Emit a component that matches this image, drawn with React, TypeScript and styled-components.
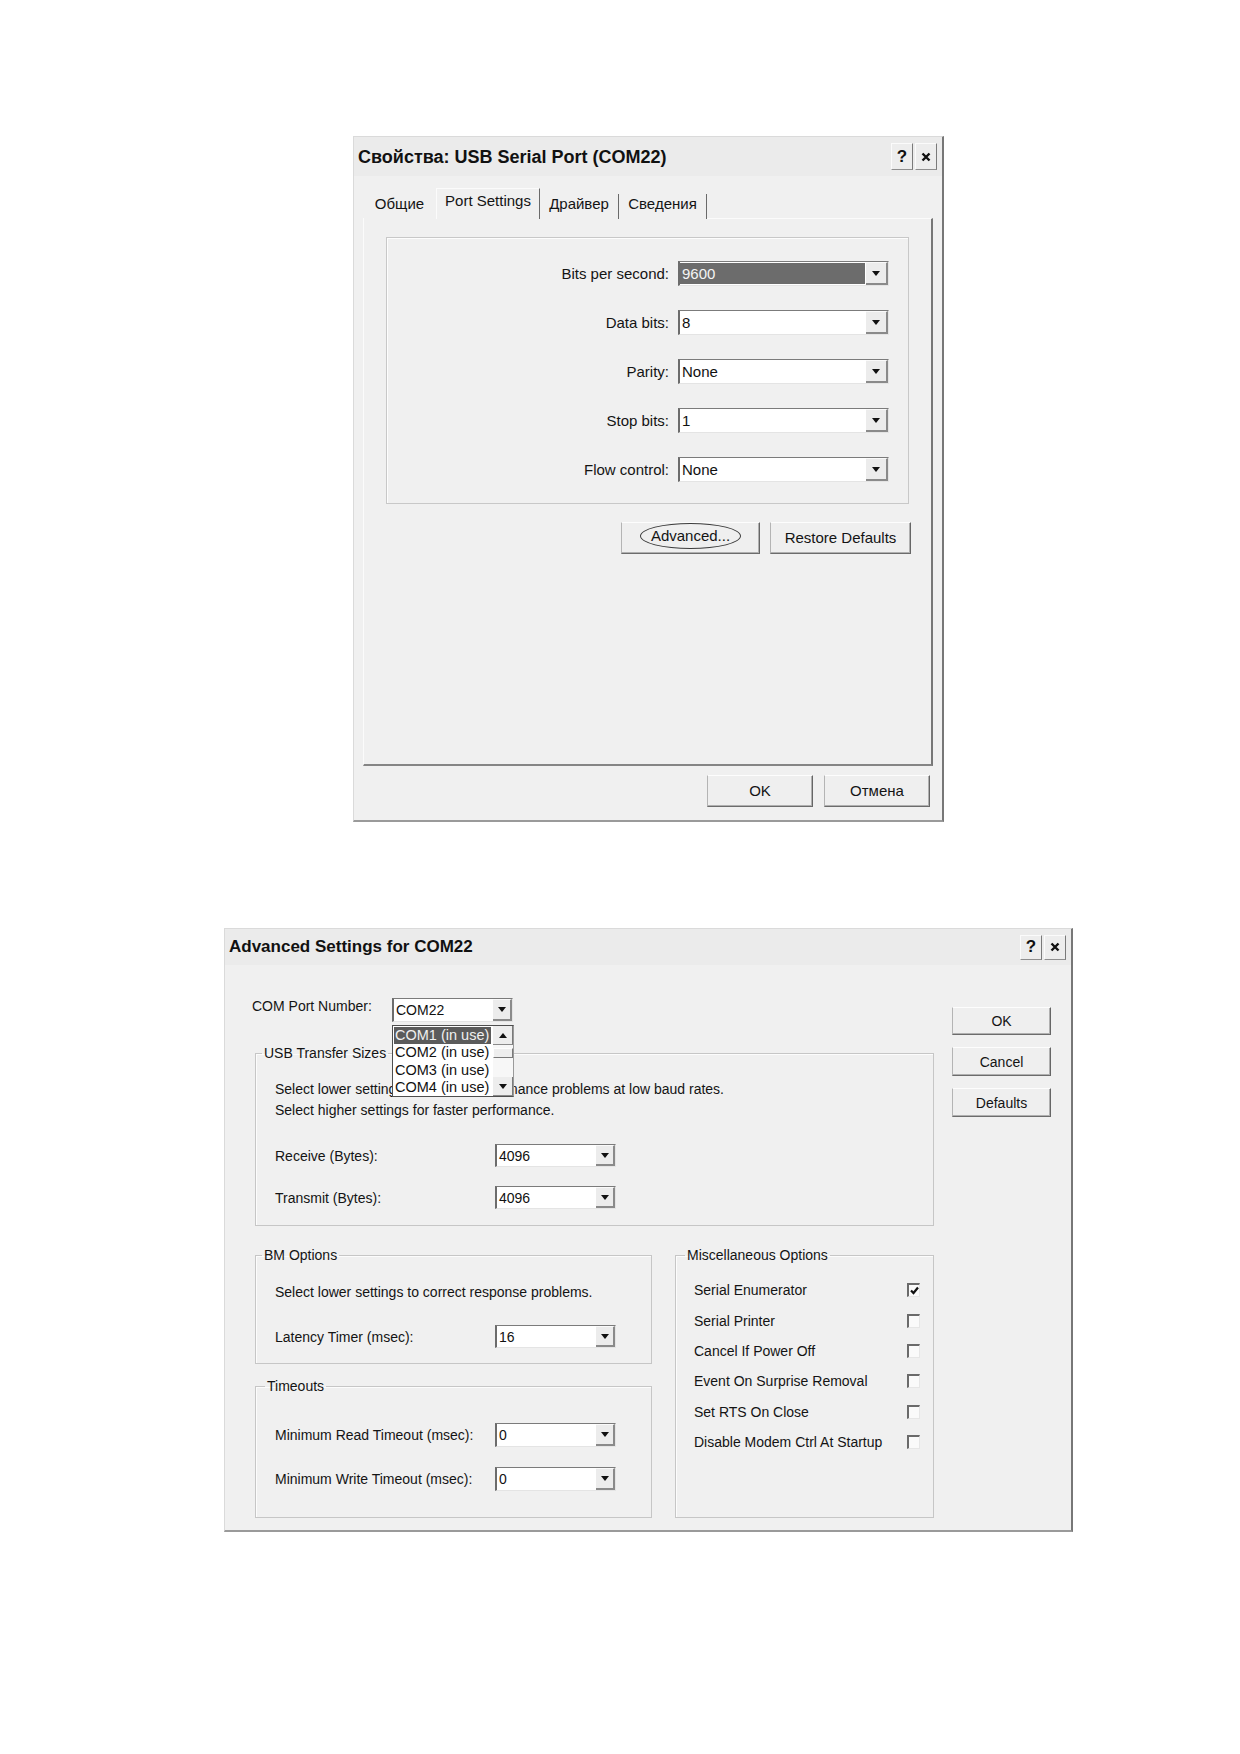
import { createGlobalStyle, styled } from 'styled-components';

type Choice = { label: string; value: string; selected?: boolean };

const portSettings: Choice[] = [
  { label: 'Bits per second:', value: '9600', selected: true },
  { label: 'Data bits:', value: '8' },
  { label: 'Parity:', value: 'None' },
  { label: 'Stop bits:', value: '1' },
  { label: 'Flow control:', value: 'None' },
];

const comPorts = ['COM1 (in use)', 'COM2 (in use)', 'COM3 (in use)', 'COM4 (in use)'];

const miscOptions = [
  { label: 'Serial Enumerator', checked: true },
  { label: 'Serial Printer' },
  { label: 'Cancel If Power Off' },
  { label: 'Event On Surprise Removal' },
  { label: 'Set RTS On Close' },
  { label: 'Disable Modem Ctrl At Startup' },
];

export default function App(): JSX.Element {
  return (
    <Page>
      <GlobalStyle />

      <Window $width={591} $height={686} $size={15}>
        <TitleBar $height={39}>
          <Caption $size={18}>Свойства: USB Serial Port (COM22)</Caption>
          <CaptionControls $height={27} />
        </TitleBar>
        <PropertiesBody>
          <TabStrip>
            <Tab $width={72}>Общие</Tab>
            <Tab $width={104} $active>
              Port Settings
            </Tab>
            <Tab $width={79} $divider>
              Драйвер
            </Tab>
            <Tab $width={88} $divider>
              Сведения
            </Tab>
          </TabStrip>
          <TabPanel>
            <SettingsFrame>
              {portSettings.map((s) => (
                <SettingRow key={s.label}>
                  <RightLabel>{s.label}</RightLabel>
                  <Combo
                    width={211}
                    height={25}
                    value={s.value}
                    selected={s.selected}
                    arrow={22}
                  />
                </SettingRow>
              ))}
            </SettingsFrame>
            <PanelActions>
              <PushButton $width={139} $height={32}>
                <FocusRing>Advanced...</FocusRing>
              </PushButton>
              <PushButton $width={141} $height={32}>
                Restore Defaults
              </PushButton>
            </PanelActions>
          </TabPanel>
          <Footer>
            <PushButton $width={106} $height={32}>
              OK
            </PushButton>
            <PushButton $width={106} $height={32}>
              Отмена
            </PushButton>
          </Footer>
        </PropertiesBody>
      </Window>

      <Window $width={849} $height={604} $size={14} $offset={106} $left={224}>
        <TitleBar $height={36}>
          <Caption $size={17}>Advanced Settings for COM22</Caption>
          <CaptionControls $height={25} />
        </TitleBar>
        <AdvancedBody>
          <MainColumn>
            <PortRow>
              <PortLabel>COM Port Number:</PortLabel>
              <ComboAnchor>
                <Combo width={121} height={24} value="COM22" arrow={19} />
                <DropList>
                  <DropItems>
                    {comPorts.map((port, i) => (
                      <DropItem key={port} $active={i === 0}>
                        {port}
                      </DropItem>
                    ))}
                  </DropItems>
                  <ScrollBar>
                    <ScrollArrow $up />
                    <ScrollTrack>
                      <ScrollThumb />
                    </ScrollTrack>
                    <ScrollArrow />
                  </ScrollBar>
                </DropList>
              </ComboAnchor>
            </PortRow>

            <Groups>
              <Group>
                <GroupTitle>USB Transfer Sizes</GroupTitle>
                <GroupContent $top={18} $bottom={16}>
                  <Hint>
                    Select lower settings to correct performance problems at
                    low baud rates.
                  </Hint>
                  <Hint>Select higher settings for faster performance.</Hint>
                  <FieldList $top={23} $gap={19}>
                    <FieldRow>
                      <span>Receive (Bytes):</span>
                      <Combo width={121} height={23} value="4096" arrow={19} />
                    </FieldRow>
                    <FieldRow>
                      <span>Transmit (Bytes):</span>
                      <Combo width={121} height={23} value="4096" arrow={19} />
                    </FieldRow>
                  </FieldList>
                </GroupContent>
              </Group>

              <LowerGrid>
                <GroupStack>
                  <Group>
                    <GroupTitle>BM Options</GroupTitle>
                    <GroupContent $top={19} $bottom={15}>
                      <Hint>
                        Select lower settings to correct response problems.
                      </Hint>
                      <FieldList $top={22} $gap={0}>
                        <FieldRow>
                          <span>Latency Timer (msec):</span>
                          <Combo width={121} height={23} value="16" arrow={19} />
                        </FieldRow>
                      </FieldList>
                    </GroupContent>
                  </Group>
                  <Group>
                    <GroupTitle $shift={3}>Timeouts</GroupTitle>
                    <GroupContent $top={29} $bottom={26}>
                      <FieldList $top={0} $gap={20}>
                        <FieldRow>
                          <span>Minimum Read Timeout (msec):</span>
                          <Combo width={121} height={24} value="0" arrow={19} />
                        </FieldRow>
                        <FieldRow>
                          <span>Minimum Write Timeout (msec):</span>
                          <Combo width={121} height={24} value="0" arrow={19} />
                        </FieldRow>
                      </FieldList>
                    </GroupContent>
                  </Group>
                </GroupStack>

                <Group>
                  <GroupTitle $shift={3}>Miscellaneous Options</GroupTitle>
                  <OptionList>
                    {miscOptions.map((o) => (
                      <OptionRow key={o.label}>
                        <span>{o.label}</span>
                        <CheckBox>
                          {o.checked && (
                            <svg width="9" height="9" viewBox="0 0 9 9">
                              <path
                                d="M1 4.5 L3.5 7 L8 1.5"
                                fill="none"
                                stroke="#111"
                                strokeWidth="2.2"
                              />
                            </svg>
                          )}
                        </CheckBox>
                      </OptionRow>
                    ))}
                  </OptionList>
                </Group>
              </LowerGrid>
            </Groups>
          </MainColumn>

          <SideButtons>
            <PushButton $width={99} $height={28}>
              OK
            </PushButton>
            <PushButton $width={99} $height={29}>
              Cancel
            </PushButton>
            <PushButton $width={99} $height={29}>
              Defaults
            </PushButton>
          </SideButtons>
        </AdvancedBody>
      </Window>
    </Page>
  );
}

function CaptionControls({ $height }: { $height: number }): JSX.Element {
  return (
    <CaptionButtons>
      <CaptionButton $height={$height}>?</CaptionButton>
      <CaptionButton $height={$height}>
        <svg width="10" height="10" viewBox="0 0 10 10">
          <path d="M1.5 1.5 L8.5 8.5 M8.5 1.5 L1.5 8.5" stroke="#111" strokeWidth="2.4" />
        </svg>
      </CaptionButton>
    </CaptionButtons>
  );
}

function Combo(props: {
  width: number;
  height: number;
  value: string;
  arrow: number;
  selected?: boolean;
}): JSX.Element {
  return (
    <ComboBox $width={props.width} $height={props.height}>
      <ComboValue $selected={props.selected}>{props.value}</ComboValue>
      <ComboArrow $width={props.arrow} />
    </ComboBox>
  );
}

const GlobalStyle = createGlobalStyle`
  body {
    margin: 0;
    background: #fff;
    font-family: "Liberation Sans", Arial, sans-serif;
    color: #141414;
  }
`;

const Page = styled.main`
  display: flex;
  flex-direction: column;
  align-items: flex-start;
  padding: 136px 0 222px;
`;

const Window = styled.section<{
  $width: number;
  $height: number;
  $size: number;
  $offset?: number;
  $left?: number;
}>`
  box-sizing: border-box;
  width: ${(p) => p.$width}px;
  height: ${(p) => p.$height}px;
  margin: ${(p) => p.$offset ?? 0}px 0 0 ${(p) => p.$left ?? 353}px;
  display: flex;
  flex-direction: column;
  background: #f0f0f0;
  border: 1px solid #dadada;
  border-right: 2px solid #777;
  border-bottom: 2px solid #9a9a9a;
  font-size: ${(p) => p.$size}px;
  line-height: 16px;
`;

const TitleBar = styled.header<{ $height: number }>`
  flex: none;
  height: ${(p) => p.$height}px;
  display: flex;
  align-items: center;
  justify-content: space-between;
  padding: 0 5px 0 4px;
  background: #ebebeb;
`;

const Caption = styled.h1<{ $size: number }>`
  margin: 0;
  font-size: ${(p) => p.$size}px;
  font-weight: bold;
  color: #111;
`;

const CaptionButtons = styled.div`
  display: flex;
  gap: 2px;
`;

const CaptionButton = styled.span<{ $height: number }>`
  box-sizing: border-box;
  width: 22px;
  height: ${(p) => p.$height}px;
  display: flex;
  align-items: center;
  justify-content: center;
  background: #ededed;
  border: 1px solid #fbfbfb;
  border-right-color: #7a7a7a;
  border-bottom-color: #8e8e8e;
  font-size: 17px;
  font-weight: bold;
  color: #111;
`;

const PropertiesBody = styled.div`
  flex: 1;
  display: flex;
  flex-direction: column;
  padding: 13px 9px 0;
`;

const TabStrip = styled.nav`
  flex: none;
  height: 30px;
  display: flex;
  align-items: flex-end;
  padding-left: 1px;
  margin-bottom: -1px;
  position: relative;
  z-index: 1;
`;

const Tab = styled.span<{ $width: number; $active?: boolean; $divider?: boolean }>`
  box-sizing: border-box;
  width: ${(p) => p.$width}px;
  height: ${(p) => (p.$active ? 31 : 25)}px;
  display: flex;
  align-items: center;
  justify-content: center;
  padding-bottom: 6px;
  background: #f0f0f0;
  border-top: ${(p) => (p.$active ? '1px solid #fbfbfb' : 'none')};
  border-left: ${(p) => (p.$active ? '1px solid #fbfbfb' : 'none')};
  border-right: ${(p) =>
    p.$active || p.$divider ? '1px solid #6a6a6a' : '1px solid transparent'};
`;

const TabPanel = styled.div`
  flex: none;
  box-sizing: border-box;
  height: 548px;
  display: flex;
  flex-direction: column;
  padding: 18px 22px 0;
  border-top: 1px solid #fbfbfb;
  border-left: 1px solid #fbfbfb;
  border-right: 2px solid #777;
  border-bottom: 2px solid #858585;
`;

const SettingsFrame = styled.div`
  box-sizing: border-box;
  height: 267px;
  display: grid;
  grid-template-columns: 1fr 211px;
  column-gap: 9px;
  row-gap: 24px;
  align-content: start;
  padding: 23px 19px 0 0;
  border: 1px solid #c8c8c8;
  box-shadow: inset 1px 1px 0 #fdfdfd;
`;

const SettingRow = styled.div`
  display: contents;
`;

const RightLabel = styled.span`
  align-self: center;
  text-align: right;
`;

const PanelActions = styled.div`
  display: flex;
  justify-content: flex-end;
  gap: 10px;
  margin: 18px -2px 0 0;
`;

const Footer = styled.div`
  display: flex;
  justify-content: flex-end;
  gap: 11px;
  margin-top: 9px;
  padding-right: 3px;
`;

const PushButton = styled.button<{ $width: number; $height: number }>`
  box-sizing: border-box;
  width: ${(p) => p.$width}px;
  height: ${(p) => p.$height}px;
  display: flex;
  align-items: center;
  justify-content: center;
  padding: 0;
  background: #efefef;
  border: 1px solid #fdfdfd;
  border-left-color: #b4b4b4;
  border-right-color: #666;
  border-bottom-color: #6c6c6c;
  box-shadow: inset -1px -1px 0 #b0b0b0;
  font: inherit;
  color: #141414;
`;

const FocusRing = styled.span`
  padding: 4px 10px;
  margin-top: -4px;
  border: 1px solid #3c3c3c;
  border-radius: 50%;
`;

const ComboBox = styled.div<{ $width: number; $height: number }>`
  box-sizing: border-box;
  width: ${(p) => p.$width}px;
  height: ${(p) => p.$height}px;
  display: flex;
  background: #fff;
  border-top: 1px solid #7b7b7b;
  border-left: 2px solid #6c6c6c;
  border-right: 1px solid #e4e4e4;
  border-bottom: 1px solid #e4e4e4;
`;

const ComboValue = styled.span<{ $selected?: boolean }>`
  flex: 1;
  display: flex;
  align-items: center;
  padding-left: 2px;
  margin: 1px 1px 1px 0;
  background: ${(p) => (p.$selected ? '#6c6c6c' : 'transparent')};
  color: ${(p) => (p.$selected ? '#f4f4f4' : '#111')};
`;

const ComboArrow = styled.span<{ $width: number }>`
  box-sizing: border-box;
  width: ${(p) => p.$width}px;
  display: flex;
  align-items: center;
  justify-content: center;
  background: #ececec;
  border-top: 1px solid #fafafa;
  border-right: 2px solid #8a8a8a;
  border-bottom: 2px solid #8a8a8a;

  &::after {
    content: '';
    border-left: 4px solid transparent;
    border-right: 4px solid transparent;
    border-top: 5px solid #111;
  }
`;

const AdvancedBody = styled.div`
  flex: 1;
  display: flex;
  gap: 18px;
  padding: 0 20px 0 27px;
`;

const MainColumn = styled.div`
  width: 683px;
  display: flex;
  flex-direction: column;
`;

const PortRow = styled.div`
  display: flex;
  align-items: flex-start;
  margin-top: 33px;
`;

const PortLabel = styled.span`
  width: 140px;
`;

const ComboAnchor = styled.div`
  position: relative;
`;

const DropList = styled.div`
  position: absolute;
  top: calc(100% + 3px);
  left: 0;
  z-index: 2;
  box-sizing: border-box;
  width: 122px;
  height: 72px;
  display: flex;
  background: #fff;
  border: 1px solid #4e4e4e;
  border-right-color: #9a9a9a;
`;

const DropItems = styled.ul`
  flex: 1;
  margin: 0;
  padding: 1px 2px 0 1px;
  list-style: none;
`;

const DropItem = styled.li<{ $active?: boolean }>`
  height: 17.3px;
  line-height: 17px;
  padding-left: 1px;
  white-space: nowrap;
  font-size: 14.5px;
  background: ${(p) => (p.$active ? '#5b5b5b' : 'transparent')};
  color: ${(p) => (p.$active ? '#f0f0f0' : '#111')};
`;

const ScrollBar = styled.div`
  width: 20px;
  display: flex;
  flex-direction: column;
  background: #f7f7f7;
`;

const ScrollArrow = styled.span<{ $up?: boolean }>`
  box-sizing: border-box;
  height: 19px;
  display: flex;
  align-items: center;
  justify-content: center;
  background: #ededed;
  border-right: 1px solid #7a7a7a;
  border-bottom: 1px solid #8a8a8a;

  &::after {
    content: '';
    border-left: 4px solid transparent;
    border-right: 4px solid transparent;
    ${(p) => (p.$up ? 'border-bottom' : 'border-top')}: 5px solid #111;
  }
`;

const ScrollTrack = styled.span`
  flex: 1;
  padding-top: 3px;
`;

const ScrollThumb = styled.span`
  display: block;
  box-sizing: border-box;
  height: 10px;
  background: #eee;
  border: 1px solid #fdfdfd;
  border-right-color: #7a7a7a;
  border-bottom-color: #7a7a7a;
`;

const Groups = styled.div`
  display: flex;
  flex-direction: column;
  gap: 21px;
  margin: 23px 0 0 3px;
`;

const Group = styled.fieldset`
  margin: 0;
  padding: 0;
  min-width: 0;
  border: 1px solid #c6c6c6;
  box-shadow: inset 1px 1px 0 #fcfcfc;
`;

const GroupTitle = styled.legend<{ $shift?: number }>`
  margin-left: ${(p) => 6 + (p.$shift ?? 0)}px;
  padding: 0 2px;
  line-height: 16px;
`;

const GroupContent = styled.div<{ $top: number; $bottom: number }>`
  padding: ${(p) => p.$top}px 0 ${(p) => p.$bottom}px 19px;
`;

const Hint = styled.p`
  margin: 0;
  line-height: 21px;
`;

const FieldList = styled.div<{ $top: number; $gap: number }>`
  display: flex;
  flex-direction: column;
  gap: ${(p) => p.$gap}px;
  margin-top: ${(p) => p.$top}px;
`;

const FieldRow = styled.div`
  display: grid;
  grid-template-columns: 220px 121px;
  align-items: center;
`;

const LowerGrid = styled.div`
  display: grid;
  grid-template-columns: 397px 259px;
  column-gap: 23px;
`;

const GroupStack = styled.div`
  display: flex;
  flex-direction: column;
  gap: 14px;
`;

const OptionList = styled.div`
  padding: 12px 13px 0 18px;
`;

const OptionRow = styled.div`
  height: 30.4px;
  display: grid;
  grid-template-columns: 1fr 13px;
  align-items: center;
`;

const CheckBox = styled.span`
  box-sizing: border-box;
  width: 13px;
  height: 14px;
  display: flex;
  align-items: center;
  justify-content: center;
  background: #fafafa;
  border-top: 2px solid #6a6a6a;
  border-left: 2px solid #6a6a6a;
  border-right: 1px solid #e6e6e6;
  border-bottom: 1px solid #e6e6e6;
`;

const SideButtons = styled.div`
  display: flex;
  flex-direction: column;
  gap: 12px;
  margin-top: 42px;
`;
